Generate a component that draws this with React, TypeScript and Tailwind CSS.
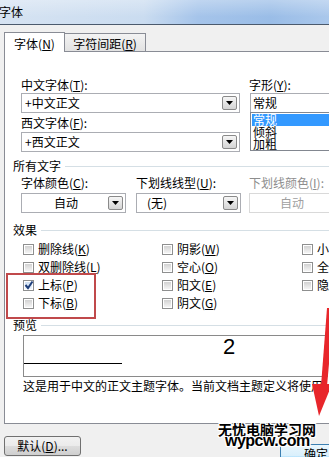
import React from "react";

const Acc = ({ c }: { c: string }) => (
  <span className="underline underline-offset-[1px]">{c}</span>
);

function DropBtn() {
  return (
    <span className="ml-auto mr-[2px] w-[15px] h-[14px] shrink-0 border border-[#8a8a8a] rounded-[2px] bg-[linear-gradient(to_bottom,#f6f6f6,#d4d4d4)] flex items-center justify-center">
      <svg width="7" height="4" viewBox="0 0 7 4">
        <polygon points="0,0 7,0 3.5,4" fill="#000" />
      </svg>
    </span>
  );
}

function Check({ label, acc, checked }: { label: string; acc: string; checked?: boolean }) {
  return (
    <div className="flex items-center h-[18px] whitespace-nowrap">
      <span className="w-[11px] h-[11px] shrink-0 border border-[#8e8f8f] bg-white p-px">
        <span
          className={
            checked
              ? "relative block w-full h-full bg-[linear-gradient(to_bottom,#cfe0f4,#eef4fb)]"
              : "block w-full h-full bg-[linear-gradient(to_bottom,#d2d2d2,#f4f4f4)]"
          }
        >
          {checked && (
            <svg className="absolute left-[-1px] top-[-2px]" width="10" height="10" viewBox="0 0 10 10">
              <path d="M1.5 5 L4 8 L8.5 1.5" stroke="#1f3f7a" strokeWidth="2" fill="none" />
            </svg>
          )}
        </span>
      </span>
      <span className="ml-[4px]">
        {label}(<Acc c={acc} />)
      </span>
    </div>
  );
}

function Group({ title }: { title: string }) {
  return (
    <div className="flex items-center h-[14px] pl-[8px]">
      <span>{title}</span>
      <div className="flex-1 h-px bg-[#d5dfe5] ml-[4px]" />
    </div>
  );
}

export default function App() {
  return (
    <div className="w-[329px] h-[457px] overflow-hidden relative bg-[#f0f0f0] text-[12px] leading-[14px] text-black font-['Noto_Sans_CJK_SC','Liberation_Sans',sans-serif]">
      <div className="w-[360px]">
        {/* title bar */}
        <div className="h-[24px] flex items-center bg-[linear-gradient(to_bottom,rgba(255,255,255,0.3),rgba(255,255,255,0)_70%),linear-gradient(to_right,#d6e3f2_0%,#cadcf0_40%,#a5c4ea_55%,#9abde7_75%,#b2cdee_100%)]">
          <span className="-ml-[1px]">字体</span>
        </div>
        <div className="h-px bg-[#4b5a6d]" />

        {/* tabs */}
        <div className="h-[26px] flex items-end pl-[4px]">
          <div className="relative z-10 -mb-px h-[20px] w-[61px] pt-[2px] border border-b-0 border-[#898c95] bg-white flex items-center justify-center whitespace-nowrap">
            字体(<Acc c="N" />)
          </div>
          <div className="h-[18px] w-[81px] pt-[2px] border border-l-0 border-b-0 border-[#898c95] bg-[linear-gradient(to_bottom,#f3f3f3,#e2e2e2)] flex items-center justify-center whitespace-nowrap">
            字符间距(<Acc c="R" />)
          </div>
        </div>

        {/* panel */}
        <div className="ml-[4px] h-[373px] border border-r-0 border-[#898c95] bg-white">
          {/* fonts */}
          <div className="flex pt-[26px] pl-[16px]">
            <div className="w-[219px] shrink-0 flex flex-col">
              <div className="h-[14px] whitespace-nowrap">
                中文字体(<Acc c="T" />):
              </div>
              <div className="mt-[1px] h-[20px] border border-[#abadb3] bg-white flex items-center">
                <span className="pl-[3px]">+中文正文</span>
                <DropBtn />
              </div>
              <div className="mt-[3px] h-[14px] whitespace-nowrap">
                西文字体(<Acc c="F" />):
              </div>
              <div className="mt-[2px] h-[20px] border border-[#abadb3] bg-white flex items-center">
                <span className="pl-[3px]">+西文正文</span>
                <DropBtn />
              </div>
            </div>
            <div className="ml-[10px] w-[100px] shrink-0 flex flex-col">
              <div className="h-[14px] whitespace-nowrap -ml-px">
                字形(<Acc c="Y" />):
              </div>
              <div className="mt-[1px] h-[20px] border border-[#abadb3] bg-white flex items-center">
                <span className="pl-[2px]">常规</span>
              </div>
              <div className="-mt-px h-[39px] border border-[#828790] bg-white overflow-hidden pt-px">
                <div className="ml-px h-[12px] leading-[12px] bg-[#3399ff] text-white pl-[1px]">常规</div>
                <div className="h-[12px] leading-[12px] pl-[2px]">倾斜</div>
                <div className="h-[12px] leading-[12px] pl-[2px]">加粗</div>
              </div>
            </div>
          </div>

          {/* all text */}
          <div className="mt-[7px]">
            <Group title="所有文字" />
          </div>
          <div className="flex mt-[3px] pl-[16px]">
            <div className="w-[105px] shrink-0 flex flex-col">
              <div className="h-[14px] whitespace-nowrap">
                字体颜色(<Acc c="C" />):
              </div>
              <div className="mt-[3px] h-[20px] border border-[#abadb3] bg-white flex items-center">
                <span className="flex-1 text-center pl-[2px]">自动</span>
                <DropBtn />
              </div>
            </div>
            <div className="ml-[10px] w-[105px] shrink-0 flex flex-col">
              <div className="h-[14px] whitespace-nowrap">
                下划线线型(<Acc c="U" />):
              </div>
              <div className="mt-[3px] h-[20px] border border-[#abadb3] bg-white flex items-center">
                <span className="pl-[10px]">(无)</span>
                <DropBtn />
              </div>
            </div>
            <div className="ml-[8px] w-[104px] shrink-0 flex flex-col text-[#8d8d8d]">
              <div className="h-[14px] whitespace-nowrap">
                下划线颜色(<Acc c="I" />):
              </div>
              <div className="mt-[3px] h-[20px] border border-[#d9d9d9] bg-white flex items-center">
                <span className="flex-1 text-center pr-[18px] text-[#a0a0a0]">自动</span>
              </div>
            </div>
          </div>

          {/* effects */}
          <div className="mt-[10px]">
            <Group title="效果" />
          </div>
          <div className="flex mt-[3px] pl-[18px]">
            <div className="w-[139px] shrink-0 flex flex-col">
              <Check label="删除线" acc="K" />
              <Check label="双删除线" acc="L" />
              <Check label="上标" acc="P" checked />
              <Check label="下标" acc="B" />
            </div>
            <div className="w-[140px] shrink-0 flex flex-col">
              <Check label="阴影" acc="W" />
              <Check label="空心" acc="O" />
              <Check label="阳文" acc="E" />
              <Check label="阴文" acc="G" />
            </div>
            <div className="shrink-0 flex flex-col">
              <Check label="小型大写字母" acc="M" />
              <Check label="全部大写字母" acc="A" />
              <Check label="隐藏" acc="H" />
            </div>
          </div>

          {/* preview */}
          <div className="mt-[6px]">
            <Group title="预览" />
          </div>
          <div className="ml-[18px] mt-[3px] w-[305px] h-[42px] border border-[#8a8a8a] bg-white">
            <div className="h-[22px] leading-[22px] pl-[199px] text-[22px] font-['Liberation_Sans',sans-serif]">2</div>
            <div className="mt-[5px] h-px w-[98px] bg-black" />
          </div>
          <div className="mt-[2px] pl-[18px] whitespace-nowrap">
            这是用于中文的正文主题字体。当前文档主题定义将使用
          </div>
        </div>

        {/* bottom buttons */}
        <div className="flex items-start">
          <div className="ml-[4px] mt-[12px] h-[20px] w-[77px] shrink-0 border border-[#707070] rounded-[3px] bg-[linear-gradient(to_bottom,#f2f2f2_0%,#ebebeb_50%,#dddddd_51%,#cfcfcf_100%)] flex items-center justify-center whitespace-nowrap">
            默认(<Acc c="D" />)...
          </div>
          <div className="ml-[199px] mt-[20px] h-[24px] w-[72px] shrink-0 border border-[#3c7fb1] rounded-[3px] bg-[linear-gradient(to_bottom,#eaf6fd,#d9f0fc_50%,#bee6fd_51%,#a7d9f5)] flex items-start justify-center pt-[2px] whitespace-nowrap">
            确定
          </div>
        </div>
      </div>

      {/* annotation: red rectangle */}
      <div className="absolute left-[6px] top-[273px] w-[90px] h-[46px] border-2 border-[#c0494b]" />

      {/* annotation: red arrow */}
      <svg className="absolute left-[300px] top-[300px]" width="40" height="125" viewBox="0 0 40 125">
        <polygon points="27,8 34,8 27,86 21,86" fill="#e8262b" />
        <polygon points="12,84 32,84 19,116" fill="#e8262b" />
      </svg>

      {/* watermark */}
      <div className="absolute left-[218px] top-[422px] text-[14px] leading-[14px] font-bold whitespace-nowrap [text-shadow:-1px_-1px_0_#fff,1px_-1px_0_#fff,-1px_1px_0_#fff,1px_1px_0_#fff,0_0_3px_#fff]">
        无忧电脑学习网
      </div>
      <div className="absolute left-[225px] top-[433px] text-[16px] leading-[16px] font-bold tracking-[-0.5px] whitespace-nowrap font-['Liberation_Sans',sans-serif] [text-shadow:-1px_-1px_0_#fff,1px_-1px_0_#fff,-1px_1px_0_#fff,1px_1px_0_#fff,0_0_3px_#fff]">
        wypcw.com
      </div>
    </div>
  );
}
